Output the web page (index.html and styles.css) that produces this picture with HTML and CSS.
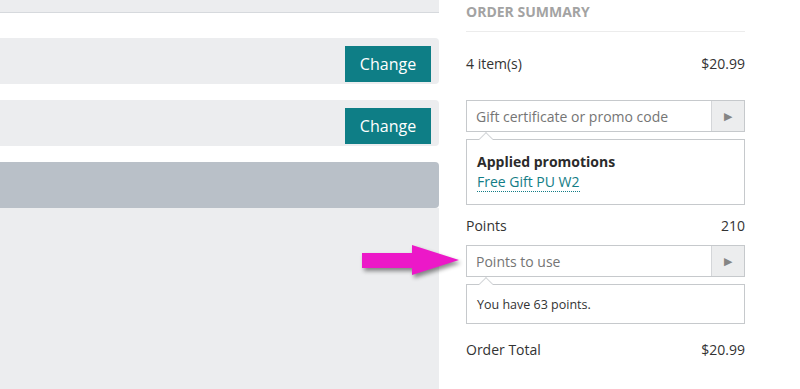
FILE: index.html
```html
<!DOCTYPE html>
<html lang="en">
<head>
  <meta charset="UTF-8">
  <title>Checkout</title>
  <link rel="stylesheet" href="styles.css">
</head>
<body>
  <!-- Pasos del checkout -->
  <div class="main">
    <div class="topbar"></div>
    <div class="steps">
      <div class="step">
        <button class="change">Change</button>
      </div>
      <div class="step">
        <button class="change">Change</button>
      </div>
      <div class="step step-active"></div>
    </div>
    <div class="rest"></div>
  </div>

  <!-- Resumen del pedido -->
  <aside class="summary">
    <h2>Order Summary</h2>
    <div class="row row-items">
      <span>4 item(s)</span>
      <span>$20.99</span>
    </div>

    <div class="field">
      <input type="text" placeholder="Gift certificate or promo code">
      <button class="go">&#9654;</button>
    </div>
    <div class="popover promos">
      <strong>Applied promotions</strong>
      <a href="#">Free Gift PU W2</a>
    </div>

    <div class="row row-points">
      <span>Points</span>
      <span>210</span>
    </div>

    <div class="field">
      <input type="text" placeholder="Points to use">
      <button class="go">&#9654;</button>
    </div>
    <div class="popover points">You have 63 points.</div>

    <div class="row row-total">
      <span>Order Total</span>
      <span>$20.99</span>
    </div>
  </aside>

  <!-- Flecha -->
  <svg class="pointer" width="104" height="40" viewBox="0 0 104 40">
    <polygon points="2,9 52,9 52,1 99,16 52,31 52,24 2,24" fill="#ec18c8"/>
  </svg>
</body>
</html>
```

FILE: styles.css
```css
/* General */
body {
  font-family: "Open Sans", Arial, sans-serif;
  margin: 0;
  padding: 0;
  display: flex;
  height: 389px;
  overflow: hidden;
  background-color: #ffffff;
  color: #333333;
}
/* Columna izquierda */
.main {
  width: 439px;
  display: flex;
  flex-direction: column;
}
.topbar {
  height: 12px;
  background-color: #ecedef;
  border-bottom: 1px solid #d6d9dd;
}
.steps {
  padding-top: 25px;
  display: flex;
  flex-direction: column;
  gap: 16px;
}
.step {
  height: 46px;
  box-sizing: border-box;
  background-color: #ecedef;
  border-radius: 0 4px 4px 0;
  display: flex;
  justify-content: flex-end;
  align-items: flex-start;
  padding: 8px 8px 0 0;
}
.step-active {
  background-color: #b9c0c8;
}
.change {
  width: 86px;
  height: 36px;
  border: none;
  background-color: #0e7e86;
  color: white;
  font-family: inherit;
  font-size: 16px;
  padding: 0;
  cursor: pointer;
}
.rest {
  flex: 1;
  background-color: #ecedef;
}
/* Resumen */
.summary {
  width: 279px;
  padding-left: 27px;
}
.summary h2 {
  margin: 0;
  padding-top: 2px;
  height: 29px;
  font-size: 14px;
  font-weight: bold;
  text-transform: uppercase;
  color: #a3a3a3;
  border-bottom: 1px solid #ececec;
}
.row {
  display: flex;
  justify-content: space-between;
  font-size: 14px;
  color: #333;
  line-height: 18px;
}
.row-items {
  margin-top: 23px;
  margin-bottom: 27px;
}
.row-points {
  margin-top: 12px;
  margin-bottom: 10px;
}
.row-total {
  margin-top: 17px;
}
.field {
  display: flex;
  height: 30px;
  border: 1px solid #c6c9cc;
}
.field input {
  flex: 1;
  border: none;
  padding: 0 9px;
  font-family: inherit;
  font-size: 14px;
  color: #333;
  outline: none;
  min-width: 0;
}
.field input::placeholder {
  color: #757575;
}
.go {
  width: 33px;
  border: none;
  border-left: 1px solid #d4d6d9;
  background-color: #ecedee;
  color: #858585;
  font-size: 11px;
  padding: 0;
}
.popover {
  position: relative;
  margin-top: 7px;
  border: 1px solid #c6c9cc;
  background-color: white;
}
.popover::before {
  content: "";
  position: absolute;
  top: -6px;
  left: 14px;
  width: 9px;
  height: 9px;
  background: white;
  border-left: 1px solid #d4d6d9;
  border-top: 1px solid #d4d6d9;
  transform: rotate(45deg);
}
.promos {
  height: 64px;
  padding: 0 10px;
  display: flex;
  flex-direction: column;
  justify-content: center;
  align-items: flex-start;
  gap: 2px;
  font-size: 14px;
}
.promos strong {
  color: #2b2b2b;
}
.promos a {
  color: #137d86;
  text-decoration: none;
  border-bottom: 1px dotted #137d86;
  line-height: 18px;
}
.points {
  height: 38px;
  padding: 0 10px;
  display: flex;
  align-items: center;
  font-size: 12.5px;
  color: #333;
}
/* Flecha */
.pointer {
  position: absolute;
  left: 360px;
  top: 244px;
  filter: drop-shadow(2px 3px 2px rgba(0, 0, 0, 0.45));
}
```
